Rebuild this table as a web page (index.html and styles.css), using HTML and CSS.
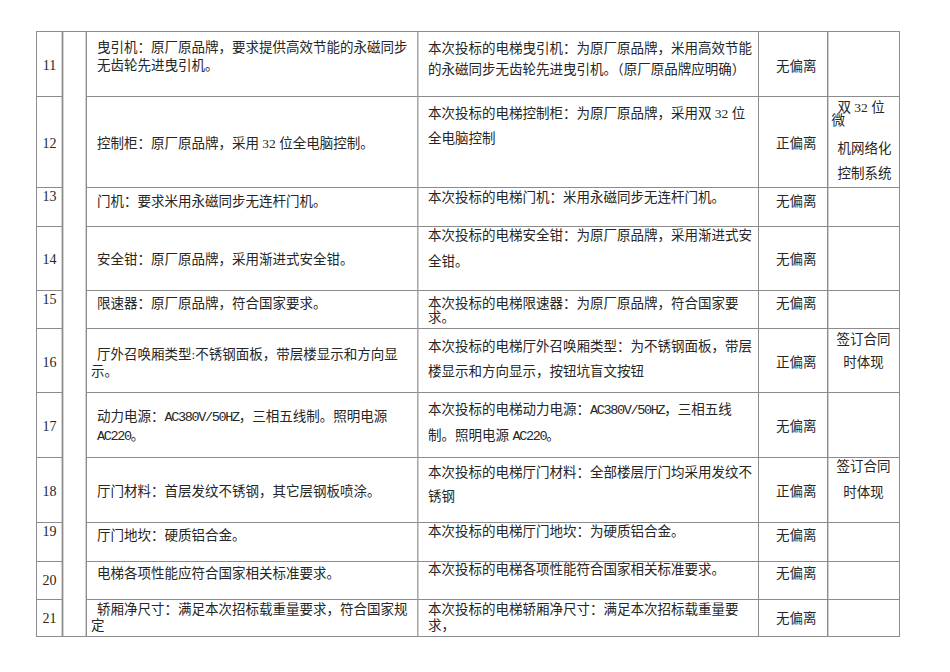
FILE: index.html
```html
<!DOCTYPE html>
<html lang="zh-CN">
<head>
<meta charset="utf-8">
<title>偏离表</title>
<link rel="stylesheet" href="styles.css">
</head>
<body>
<div class="table">
  <div class="gap"></div>

  <div class="row r11">
    <div class="cell num">11</div>
    <div class="cell req">曳引机：原厂原品牌，要求提供高效节能的永磁同步<br>无齿轮先进曳引机。</div>
    <div class="cell resp">本次投标的电梯曳引机：为原厂原品牌，米用高效节能<br>的永磁同步无齿轮先进曳引机。（原厂原品牌应明确）</div>
    <div class="cell dev">无偏离</div>
    <div class="cell note"></div>
  </div>

  <div class="row r12">
    <div class="cell num">12</div>
    <div class="cell req">控制柜：原厂原品牌，采用 32 位全电脑控制。</div>
    <div class="cell resp">本次投标的电梯控制柜：为原厂原品牌，采用双 32 位<br>全电脑控制</div>
    <div class="cell dev">正偏离</div>
    <div class="cell note">
      <div class="n1">双 32 位</div>
      <div class="n2">微</div>
      <div class="n3">机网络化</div>
      <div class="n4">控制系统</div>
    </div>
  </div>

  <div class="row r13">
    <div class="cell num">13</div>
    <div class="cell req">门机：要求米用永磁同步无连杆门机。</div>
    <div class="cell resp">本次投标的电梯门机：米用永磁同步无连杆门机。</div>
    <div class="cell dev">无偏离</div>
    <div class="cell note"></div>
  </div>

  <div class="row r14">
    <div class="cell num">14</div>
    <div class="cell req">安全钳：原厂原品牌，采用渐进式安全钳。</div>
    <div class="cell resp"><div class="tx">本次投标的电梯安全钳：为原厂原品牌，采用渐进式安<br>全钳。</div></div>
    <div class="cell dev">无偏离</div>
    <div class="cell note"></div>
  </div>

  <div class="row r15">
    <div class="cell num">15</div>
    <div class="cell req">限速器：原厂原品牌，符合国家要求。</div>
    <div class="cell resp">本次投标的电梯限速器：为原厂原品牌，符合国家要<br>求。</div>
    <div class="cell dev">无偏离</div>
    <div class="cell note"></div>
  </div>

  <div class="row r16">
    <div class="cell num">16</div>
    <div class="cell req hang">厅外召唤厢类型:不锈钢面板，带层楼显示和方向显<br>示。</div>
    <div class="cell resp">本次投标的电梯厅外召唤厢类型：为不锈钢面板，带层<br>楼显示和方向显示，按钮坑盲文按钮</div>
    <div class="cell dev">正偏离</div>
    <div class="cell note"><div class="tx">签订合同<br>时体现</div></div>
  </div>

  <div class="row r17">
    <div class="cell num">17</div>
    <div class="cell req">动力电源：<span class="mono">AC380V/50HZ</span>，三相五线制。照明电源<br><span class="mono">AC220</span>。</div>
    <div class="cell resp">本次投标的电梯动力电源：<span class="mono">AC380V/50HZ</span>，三相五线<br>制。照明电源 <span class="mono">AC220</span>。</div>
    <div class="cell dev">无偏离</div>
    <div class="cell note"></div>
  </div>

  <div class="row r18">
    <div class="cell num">18</div>
    <div class="cell req">厅门材料：首层发纹不锈钢，其它层钢板喷涂。</div>
    <div class="cell resp">本次投标的电梯厅门材料：全部楼层厅门均采用发纹不<br>锈钢</div>
    <div class="cell dev">正偏离</div>
    <div class="cell note"><div class="tx">签订合同<br>时体现</div></div>
  </div>

  <div class="row r19">
    <div class="cell num">19</div>
    <div class="cell req">厅门地坎：硬质铝合金。</div>
    <div class="cell resp">本次投标的电梯厅门地坎：为硬质铝合金。</div>
    <div class="cell dev">无偏离</div>
    <div class="cell note"></div>
  </div>

  <div class="row r20">
    <div class="cell num">20</div>
    <div class="cell req">电梯各项性能应符合国家相关标准要求。</div>
    <div class="cell resp">本次投标的电梯各项性能符合国家相关标准要求。</div>
    <div class="cell dev">无偏离</div>
    <div class="cell note"></div>
  </div>

  <div class="row r21">
    <div class="cell num">21</div>
    <div class="cell req hang">轿厢净尺寸：满足本次招标载重量要求，符合国家规<br>定</div>
    <div class="cell resp">本次投标的电梯轿厢净尺寸：满足本次招标载重量要<br>求，</div>
    <div class="cell dev">无偏离</div>
    <div class="cell note"></div>
  </div>
</div>
</body>
</html>
```
FILE: styles.css
```css
html, body {
  margin: 0;
  padding: 0;
  background: #ffffff;
}

.table {
  display: grid;
  grid-template-columns: 26px 24px 331px 341px 69px 72px;
  grid-template-rows: 65px 91px 39px 64px 38px 64px 65px 65px 39px 38px 37px;
  box-sizing: border-box;
  width: 864px;
  margin: 31px 0 0 36px;
  border-top: 1px solid #8c8c8c;
  border-left: 1px solid #8c8c8c;
  font-family: "Liberation Serif", "Noto Sans CJK SC", serif;
  font-size: 13.5px;
  color: #262626;
}

.row {
  display: contents;
}

.gap {
  grid-column: 2;
  grid-row: 1 / -1;
  box-sizing: border-box;
  border-right: 1px solid #8c8c8c;
  border-bottom: 1px solid #8c8c8c;
  box-shadow: inset 1px 0 0 #d2d2d2, inset -1px 0 0 #d2d2d2;
}

.cell {
  box-sizing: border-box;
  border-right: 1px solid #8c8c8c;
  border-bottom: 1px solid #8c8c8c;
  line-height: 16px;
  white-space: nowrap;
  min-width: 0;
}

.num {
  text-align: center;
  font-size: 14px;
  box-shadow: inset -1px 0 0 #d2d2d2;
}

.req {
  padding-left: 10px;
  border-right-color: #a8a8a8;
}

.req.hang {
  padding-left: 4px;
  text-indent: 6px;
}

.resp {
  padding-left: 10px;
  box-shadow: inset 1px 0 0 #d0d0d0;
}

.dev {
  padding-left: 17px;
}

.note {
  text-align: center;
  box-shadow: inset 1px 0 0 #d0d0d0;
}

.mono {
  font-family: "Liberation Mono", monospace;
  font-size: 13.5px;
  letter-spacing: -1.35px;
}

/* row 11 */
.r11 .num { padding-top: 26px; }
.r11 .req { padding-top: 6.5px; line-height: 18.7px; }
.r11 .resp { padding-top: 5.5px; line-height: 21.7px; }
.r11 .dev { padding-top: 26.5px; }

/* row 12 */
.r12 .num { padding-top: 39px; }
.r12 .req { padding-top: 39px; }
.r12 .resp { padding-top: 5px; line-height: 24.7px; }
.r12 .dev { padding-top: 39px; }
.r12 .note {
  text-align: left;
  padding: 3.5px 0 0 3.5px;
}
.r12 .note .n1 { padding-left: 6px; line-height: 13px; }
.r12 .note .n2 { line-height: 13px; }
.r12 .note .n3 { padding-left: 6px; margin-top: 9px; line-height: 25px; }
.r12 .note .n4 { padding-left: 6px; line-height: 25px; }

/* row 13 */
.r13 .num { padding-top: 1px; }
.r13 .req { padding-top: 6.3px; }
.r13 .resp { padding-top: 2px; }
.r13 .dev { padding-top: 6px; }

/* row 14 */
.r14 .num { padding-top: 25px; }
.r14 .req { padding-top: 25px; }
.r14 .resp { line-height: 26px; }
.r14 .resp .tx { margin-top: -4.3px; }
.r14 .dev { padding-top: 25px; }

/* row 15 */
.r15 .num { padding-top: 0.5px; }
.r15 .req { padding-top: 5.3px; }
.r15 .resp { padding-top: 5.5px; line-height: 14px; }
.r15 .dev { padding-top: 5.3px; }

/* row 16 */
.r16 .num { padding-top: 25.7px; }
.r16 .req { padding-top: 16.6px; line-height: 17.4px; }
.r16 .resp { padding-top: 5.2px; line-height: 25px; }
.r16 .dev { padding-top: 25.7px; }
.r16 .note { line-height: 23.4px; }
.r16 .note .tx { margin-top: -1.4px; }

/* row 17 */
.r17 .num { padding-top: 25.7px; }
.r17 .req { padding-top: 15.4px; line-height: 17.7px; }
.r17 .resp { padding-top: 3.8px; line-height: 25px; }
.r17 .dev { padding-top: 25.7px; }

/* row 18 */
.r18 .num { padding-top: 25.7px; }
.r18 .req { padding-top: 25.7px; }
.r18 .resp { padding-top: 2.7px; line-height: 24px; }
.r18 .dev { padding-top: 25.7px; }
.r18 .note { line-height: 25.6px; }
.r18 .note .tx { margin-top: -4.1px; }

/* row 19 */
.r19 .num { padding-top: 0.7px; }
.r19 .req { padding-top: 5px; }
.r19 .resp { padding-top: 0.7px; }
.r19 .dev { padding-top: 5px; }

/* row 20 */
.r20 .num { padding-top: 10.7px; }
.r20 .req { padding-top: 4px; }
.r20 .resp { padding-top: 0; }
.r20 .dev { padding-top: 4px; }

/* row 21 */
.r21 .num { padding-top: 11px; }
.r21 .req { padding-top: 1.6px; line-height: 16.7px; }
.r21 .resp { padding-top: 1.6px; line-height: 16.7px; }
.r21 .dev { padding-top: 11.3px; }
```
